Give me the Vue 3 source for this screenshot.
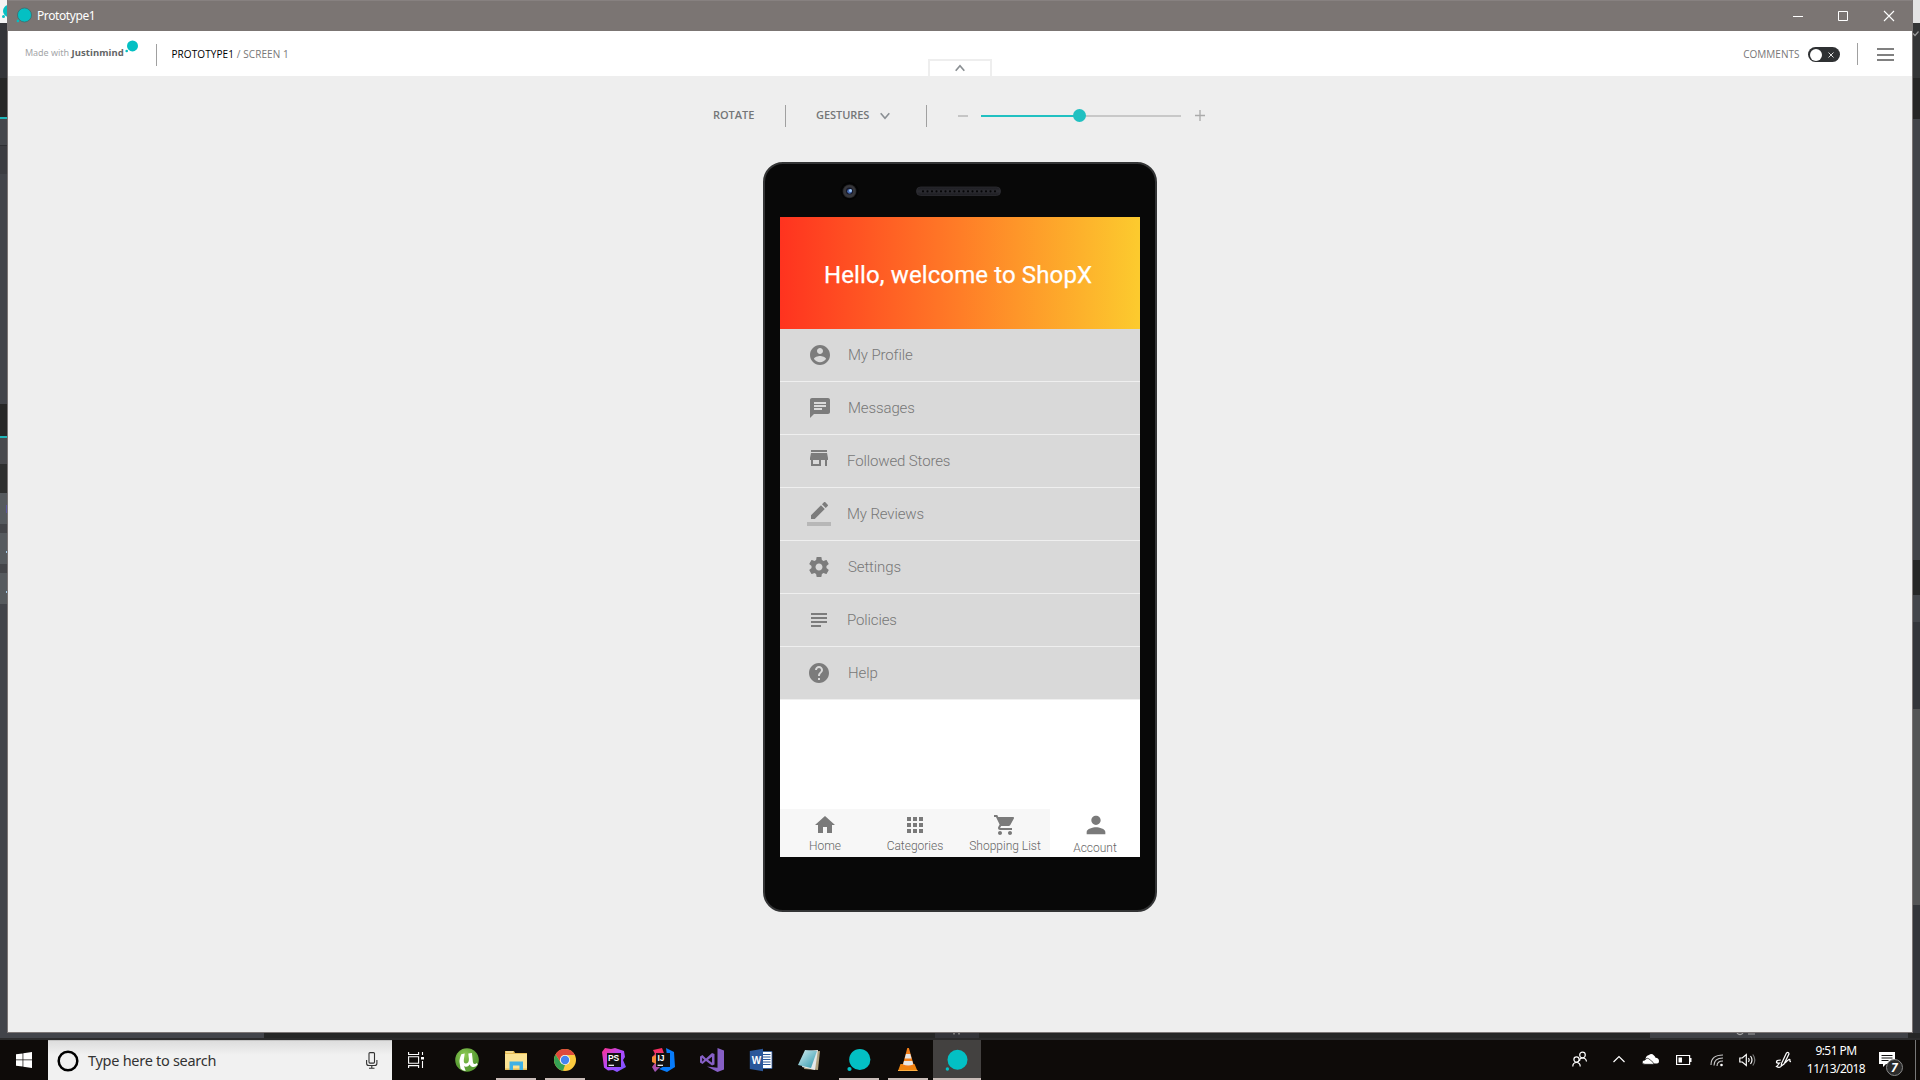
<script setup>
const menu = [
  { label: 'My Profile', x: 28, y: 14, t: 68, d: 'M12 2C6.48 2 2 6.48 2 12s4.48 10 10 10 10-4.48 10-10S17.52 2 12 2zm0 3c1.66 0 3 1.34 3 3s-1.34 3-3 3-3-1.34-3-3 1.34-3 3-3zm0 14.2c-2.5 0-4.71-1.28-6-3.22.03-1.99 4-3.08 6-3.08 1.99 0 5.97 1.09 6 3.08-1.29 1.94-3.5 3.22-6 3.22z' },
  { label: 'Messages', x: 28, y: 14, t: 68, d: 'M20 2H4c-1.1 0-1.99.9-1.99 2L2 22l4-4h14c1.1 0 2-.9 2-2V4c0-1.1-.9-2-2-2zM6 9h12v2H6V9zm8 5H6v-2h8v2zm4-6H6V6h12v2z' },
  { label: 'Followed Stores', x: 27, y: 11, t: 67, d: 'M20 4H4v2h16V4zm1 10v-2l-1-5H4l-1 5v2h1v6h10v-6h4v6h2v-6h1zm-9 4H6v-4h6v4z' },
  { label: 'My Reviews', x: 27, y: 14, t: 67, bar: true, d: 'M17.75 7L14 3.25l-10 10V17h3.75l10-10zm2.96-2.96c.39-.39.39-1.02 0-1.41L18.37.29c-.39-.39-1.02-.39-1.41 0L15 2.25 18.75 6l1.96-1.96z' },
  { label: 'Settings', x: 27, y: 14, t: 68, d: 'M19.43 12.98c.04-.32.07-.64.07-.98s-.03-.66-.07-.98l2.11-1.65c.19-.15.24-.42.12-.64l-2-3.46c-.12-.22-.39-.3-.61-.22l-2.49 1c-.52-.4-1.08-.73-1.69-.98l-.38-2.65C14.46 2.18 14.25 2 14 2h-4c-.25 0-.46.18-.49.42l-.38 2.65c-.61.25-1.17.59-1.69.98l-2.49-1c-.23-.09-.49 0-.61.22l-2 3.46c-.13.22-.07.49.12.64l2.11 1.65c-.04.32-.07.65-.07.98s.03.66.07.98l-2.11 1.65c-.19.15-.24.42-.12.64l2 3.46c.12.22.39.3.61.22l2.49-1c.52.4 1.08.73 1.69.98l.38 2.65c.03.24.24.42.49.42h4c.25 0 .46-.18.49-.42l.38-2.65c.61-.25 1.17-.59 1.69-.98l2.49 1c.23.09.49 0 .61-.22l2-3.46c.12-.22.07-.49-.12-.64l-2.11-1.65zM12 15.5c-1.93 0-3.5-1.57-3.5-3.5s1.57-3.5 3.5-3.5 3.5 1.57 3.5 3.5-1.57 3.5-3.5 3.5z' },
  { label: 'Policies', x: 27, y: 14, t: 67, d: 'M14 17H4v2h10v-2zm6-8H4v2h16V9zM4 15h16v-2H4v2zM4 5v2h16V5H4z' },
  { label: 'Help', x: 27, y: 14, t: 68, d: 'M12 2C6.48 2 2 6.48 2 12s4.48 10 10 10 10-4.48 10-10S17.52 2 12 2zm1 17h-2v-2h2v2zm2.07-7.75l-.9.92C13.45 12.9 13 13.5 13 15h-2v-.5c0-1.1.45-2.1 1.17-2.83l1.24-1.26c.37-.36.59-.86.59-1.41 0-1.1-.9-2-2-2s-2 .9-2 2H8c0-2.21 1.79-4 4-4s4 1.79 4 4c0 .88-.36 1.68-.93 2.25z' },
]
const tabs = [
  { label: 'Home', d: 'M10 20v-6h4v6h5v-8h3L12 3 2 12h3v8z' },
  { label: 'Categories', d: 'M4 8h4V4H4v4zm6 12h4v-4h-4v4zm-6 0h4v-4H4v4zm0-6h4v-4H4v4zm6 0h4v-4h-4v4zm6-10v4h4V4h-4zm-6 4h4V4h-4v4zm6 6h4v-4h-4v4zm0 6h4v-4h-4v4z' },
  { label: 'Shopping List', d: 'M7 18c-1.1 0-1.99.9-1.99 2S5.9 22 7 22s2-.9 2-2-.9-2-2-2zM1 2v2h2l3.6 7.59-1.35 2.45c-.16.28-.25.61-.25.96 0 1.1.9 2 2 2h12v-2H7.42c-.14 0-.25-.11-.25-.25l.03-.12.9-1.63h7.45c.75 0 1.41-.41 1.75-1.03l3.58-6.49c.08-.14.12-.31.12-.48 0-.55-.45-1-1-1H5.21l-.94-2H1zm16 16c-1.1 0-1.99.9-1.99 2s.89 2 1.99 2 2-.9 2-2-.9-2-2-2z' },
  { label: 'Account', active: true, d: 'M12 12c2.21 0 4-1.79 4-4s-1.79-4-4-4-4 1.79-4 4 1.79 4 4 4zm0 2c-2.67 0-8 1.34-8 4v2h16v-2c0-2.66-5.33-4-8-4z' },
]
const leftStrip = [
  [23, '#f4f4f4'], [55, '#343539'], [39, '#272727'], [2, '#1fb5b8'], [26, '#44464b'], [1, '#2e2f33'], [28, '#3b3c41'], [230, '#42444a'],
  [32, '#272727'], [2, '#1fb5b8'], [26, '#48494d'], [29, '#2e2f2f'], [31, '#565a5e'], [9, '#444549'], [31, '#565a5e'], [9, '#444549'], [31, '#565a5e'], [436, '#42444a'],
]
const rightStrip = [[23, '#e4e4e4'], [55, '#343536'], [41, '#262626'], [441, '#43454a'], [35, '#262727'], [27, '#43464b'], [87, '#34363b'], [196, '#545556'], [135, '#34363b']]
const speakerDots = Array.from({ length: 17 }, (_, i) => 8 + i * 4.5)
</script>

<template>
  <div class="desktop">
    <div class="stage">
      <div class="strip">
        <div v-for="(s, i) in leftStrip" :key="i" :style="{ height: s[0] + 'px', background: s[1] }"></div>
        <svg class="peek" width="7" height="600"><circle cx="9" cy="11" r="6" fill="#04c0c3" /><circle cx="3.500" cy="16.500" r="1.500" fill="#04c0c3" /><path d="M6 505h1v8H6z" fill="#5a56a0" /><path d="M6 551h1v2H6zM6 591h1v2H6z" fill="#9fc8e8" /></svg>
      </div>
      <div class="window">
        <header class="titlebar">
          <svg width="16" height="16"><circle cx="8.500" cy="8" r="7" fill="#04c0c3" stroke="#3b6667" stroke-width=".7" /><circle cx="1.900" cy="13.900" r="1.300" fill="#04c0c3" /></svg>
          <span class="wtitle">Prototype1</span>
          <svg class="controls" width="102" height="12" fill="none" stroke="#fff">
            <path d="M0 6.500h10M45.500 1.500h9v9h-9z" /><path d="M91 1l10 10M101 1l-10 10" stroke-width="1.100" />
          </svg>
        </header>
        <div class="appbar">
          <div class="made"><span class="made1">Made with</span><b>Justinmind</b></div>
          <svg class="madedot" width="13" height="13"><circle cx="7.500" cy="5.900" r="5.500" fill="#04c0c3" /><circle cx="1.700" cy="11" r="1.300" fill="#04c0c3" /></svg>
          <i class="sep sep-a"></i>
          <div class="crumbs"><span>PROTOTYPE1</span> / SCREEN 1</div>
          <div class="pull"><svg width="10" height="8" fill="none" stroke="#8a8f93" stroke-width="1.700"><path d="M.7 6.700L5 1.700l4.300 5" /></svg></div>
          <div class="comments">COMMENTS</div>
          <div class="toggle"><i></i><svg width="6" height="6" stroke="#ddd" stroke-width="1"><path d="M.5 .5l5 5M5.500 .5l-5 5" /></svg></div>
          <i class="sep sep-b"></i>
          <div class="burger"><i></i><i></i><i></i></div>
        </div>
        <main class="canvas">
          <div class="tools">
            <span class="rotate">ROTATE</span>
            <i class="sep"></i>
            <span class="gest">GESTURES</span>
            <svg class="chev" width="10" height="8" fill="none" stroke="#8a8f93" stroke-width="1.600"><path d="M.7 1.200L5 6.200l4.300-5" /></svg>
            <i class="sep sep-c"></i>
            <svg class="minus" width="10" height="11" stroke="#b4b4b4" stroke-width="1.400"><path d="M0 5h10" /></svg>
            <div class="slider"><i class="fill"></i><i class="thumb"></i></div>
            <svg class="plus" width="10" height="12" stroke="#aaa" stroke-width="1.300"><path d="M0 5.500h10M5 0v11" /></svg>
          </div>
          <div class="phone">
            <svg class="bezel" width="390" height="53">
              <defs>
                <radialGradient id="lens"><stop offset="0" stop-color="#33343c" /><stop offset=".8" stop-color="#37373b" /><stop offset="1" stop-color="#18181a" /></radialGradient>
                <linearGradient id="grille" x2="0" y2="1"><stop offset="0" stop-color="#1c1c20" /><stop offset=".5" stop-color="#2c2c32" /><stop offset="1" stop-color="#1d1d21" /></linearGradient>
              </defs>
              <circle cx="84.500" cy="27" r="9" fill="#030303" />
              <circle cx="84.500" cy="27.300" r="7" fill="url(#lens)" />
              <circle cx="84.500" cy="27" r="3.600" fill="#15182a" />
              <circle cx="84.600" cy="27.300" r="2.400" fill="#4569b0" /><circle cx="85.500" cy="26.600" r="1.500" fill="#9cc4f2" />
              <rect x="151.500" y="23" width="84" height="8.500" rx="4" fill="url(#grille)" stroke="#303036" stroke-width=".7" />
              <circle v-for="d in speakerDots" :key="d" :cx="150 + d" cy="27.300" r="1.100" fill="#050507" />
            </svg>
            <div class="screen">
              <div class="hero">Hello, welcome to ShopX</div>
              <div v-for="m in menu" :key="m.label" class="row">
                <svg width="24" height="24" :style="{ marginLeft: m.x + 'px', marginTop: m.y + 'px' }"><path v-if="m.bar" d="M0 20h24v4H0z" fill="#b7b7b7" /><path :d="m.d" fill="#7c7c7c" /></svg>
                <span :style="{ marginLeft: m.t - m.x - 24 + 'px' }">{{ m.label }}</span>
              </div>
              <nav class="tabs">
                <div v-for="t in tabs" :key="t.label" class="tab" :class="{ active: t.active }">
                  <svg viewBox="0 0 24 24"><path :d="t.d" fill="#7a7a7a" /></svg><span>{{ t.label }}</span>
                </div>
              </nav>
            </div>
          </div>
        </main>
      </div>
      <div class="strip right">
        <div v-for="(s, i) in rightStrip" :key="i" :style="{ height: s[0] + 'px', background: s[1] }"></div>
        <svg class="tick" width="6" height="6" fill="none" stroke="#9a9a9a" stroke-width="1.200"><path d="M0 2.500l2 2L5.500 .5" /></svg>
      </div>
    </div>
    <div class="below">
      <i class="b1"></i>
      <svg class="b2" width="44" height="5"><path d="M18 0h2v1.500h-2zM23 0h2v1.500h-2z" fill="#777" /></svg>
      <svg class="b3" width="258" height="5"><path d="M87 0q3 3 6 0M98 1h7" fill="none" stroke="#a0a0a0" stroke-width="1.200" /></svg>
    </div>

    <footer class="taskbar">
      <svg class="start" width="16" height="16" fill="#fff"><path d="M0 2.300l6.600-.9v6.200H0zM7.300 1.300L16 0v7.600H7.300zM0 8.300h6.600v6.300L0 13.700zM7.300 8.300H16V16l-8.700-1.200z" /></svg>
      <div class="search">
        <svg width="22" height="22"><circle cx="11" cy="11" r="9.300" fill="none" stroke="#000" stroke-width="2.500" /></svg>
        <span>Type here to search</span>
        <svg class="mic" width="12" height="17" fill="none" stroke="#333" stroke-width="1.100"><rect x="3" y=".6" width="5.500" height="10.500" rx="1" /><path d="M.6 8v3.200q0 2.300 2.300 2.300h5.700q2.300 0 2.300-2.300V8M5.800 13.500v2.500M3 16.300h5.500" /></svg>
      </div>
      <svg class="taskview" width="16" height="16" fill="none" stroke="#fff" stroke-width="1.100"><path d="M.6 0v2.500h10V0M.6 4.800h10v6.500H.6zM.6 16v-2.400h10V16M14.500 0v3M14.500 9v7" /><path d="M13 5h3v2.500h-3z" fill="#fff" stroke="none" /></svg>
      <div class="apps">
        <div class="app">
          <svg width="24" height="24"><defs><radialGradient id="ut" cx=".4" cy=".3"><stop offset="0" stop-color="#8fcb55" /><stop offset="1" stop-color="#5b9f35" /></radialGradient></defs><circle cx="12" cy="12" r="11.800" fill="url(#ut)" /><path d="M6.300 6.300l3.400-.8-.9 6.500q-.3 3.700 2.400 3.500 2.800-.3 2.700-4.500L13.300 5.500l3.600-.6 1 9q.3 2.500 2.300 2l1.800-.8.6 1.700q-2.500 2.700-5 2.200-2.200-.5-2.900-2.600-1.500 2.600-4 2.400-.9 0-1.700-.8l1.700 5q-3.200-.6-5.200-2.600L4.500 14q-.3-2.500 1.800-7.700z" fill="#fff" /></svg>
        </div>
        <div class="app run">
          <svg width="24" height="24"><path d="M1 3h9l1 2h12v17H1z" fill="#e7bd55" /><path d="M1 6h22v14.500H1z" fill="#fbe393" /><path d="M2 4h7" stroke="#fff4c9" /><path d="M5.500 22v-8.500h13.500V22h-3.500v-4.500H9V22z" fill="#3fb1e5" /></svg>
        </div>
        <div class="app run">
          <svg width="24" height="24"><circle cx="12" cy="12" r="11" fill="#fbca3e" /><path d="M2.500 6.500A11 11 0 0 1 21.800 7H12a5 5 0 0 0-4.500 7z" fill="#dd4a3d" /><path d="M2.500 6.500L7.600 14.500 12 17l-2 5.800A11 11 0 0 1 2.500 6.500z" fill="#35a153" /><circle cx="12" cy="12" r="5.100" fill="#f5f5f5" /><circle cx="12" cy="12" r="4.200" fill="#4484f0" /></svg>
        </div>
        <div class="app">
          <svg width="24" height="24"><defs><linearGradient id="ps" x2="1" y2="1"><stop offset="0" stop-color="#ff318c" /><stop offset=".5" stop-color="#b04bff" /><stop offset="1" stop-color="#7056ff" /></linearGradient></defs><path d="M0 4l3-4 6 1 4-1 9 3 1 6-2 3 3 7-9 5-4-2-5 .5-4-3z" fill="url(#ps)" /><rect x="5" y="5" width="14" height="14" fill="#101010" /><text class="jb" x="5.900" y="12.500">PS</text><path d="M6.500 17.300h5.500" stroke="#fff" stroke-width="1.200" /></svg>
        </div>
        <div class="app">
          <svg width="24" height="24"><defs><linearGradient id="ij" x2="0" y2="1"><stop offset="0" stop-color="#ff2b5b" /><stop offset="1" stop-color="#9957b9" /></linearGradient></defs><path d="M2 2l9-2 3 8-3 9-7 7-3-5 3-4-3-6 3-3z" fill="url(#ij)" /><path d="M1 9l4-2v9l-4-2z" fill="#f58b36" /><path d="M15 0l8 4 1 15-8 5-8-3 9-5z" fill="#087cfa" /><rect x="5" y="5" width="14" height="14" fill="#101010" /><text class="jb" x="6.500" y="12.500">IJ</text><path d="M6.500 17.300h5.500" stroke="#fff" stroke-width="1.200" /></svg>
        </div>
        <div class="app">
          <svg width="24" height="24" fill="#865fc5"><path d="M17.500 0L24 2.500v19L17.500 24 7 18.500l10.500 1.200z" /><path d="M0 8.500L2.500 7 6 10.500 12 5l2.500 1v10.500L12 17.500 6 13l-3.500 3L0 14.500zM2.200 9.800v3.900l2-2zM12 8.700l-4 3 4 3z" fill-rule="evenodd" /></svg>
        </div>
        <div class="app">
          <svg width="24" height="24"><path d="M12 3.500h11v17H12z" fill="#fff" stroke="#2b579a" stroke-width=".8" /><path d="M14 6.500h7.500M14 9h7.500M14 11.500h7.500M14 14h7.500M14 16.500h7.500" stroke="#2b579a" /><path d="M.8 3L14 .8v22.400L.8 21z" fill="#2b579a" /><text class="word" x="2.800" y="16">W</text></svg>
        </div>
        <div class="app">
          <svg class="note" width="24" height="24"><defs><linearGradient id="np" x2="1" y2="1"><stop offset="0" stop-color="#d9f0f3" /><stop offset="1" stop-color="#2895aa" /></linearGradient></defs><path d="M10 4l12-1-2 19-14-1z" fill="#b0a27e" /><path d="M8 3l12-1-3 20-13-3z" fill="#e5e8e8" /><path d="M7 2l12 1-6 17-13-3z" fill="url(#np)" /></svg>
        </div>
        <div class="app run"><svg width="24" height="24" fill="#03c0c4"><circle cx="12.800" cy="11.500" r="10.600" /><circle cx="2.500" cy="21" r="2.100" /></svg></div>
        <div class="app run">
          <svg width="24" height="24"><path d="M4.500 16h14l3 7H2z" fill="#ee8410" /><path d="M11.300 0h1.600L18 18q-5.500 3-11.500 0z" fill="#f47f18" /><path d="M10 6h4.300l1.200 4.500H8.700zM8 13h8.300l1 3.500q-5 2-10.300 0z" fill="#e6e6e6" /><path d="M2 22h19.500v1H2z" fill="#ffb043" /></svg>
        </div>
        <div class="app active"><svg width="24" height="24" fill="#03c0c4"><circle cx="12.500" cy="11.800" r="10" /><circle cx="2.400" cy="21" r="1.700" /></svg></div>
      </div>
      <div class="tray">
        <svg width="16" height="16" fill="none" stroke="#fff" stroke-width="1.200"><circle cx="10.500" cy="4" r="2.800" /><path d="M7.500 10q0-3 3-3 3.500 0 4 3.500" /><circle cx="4.500" cy="8.500" r="2.600" /><path d="M.8 15.500q0-4 3.700-4t3.700 4" /></svg>
        <svg width="14" height="16" fill="none" stroke="#fff" stroke-width="1.200" style="margin-left: 24px"><path d="M1.500 11l5.500-5.500L12.500 11" /></svg>
        <svg width="18" height="16" fill="#fff" style="margin-left: 16px"><path d="M3.500 8Q4 4.500 7 4q2.500-2 5 .5 1.500 1.200 1.500 2.300 3.500.2 3.500 3.400 0 2.300-2 2.300H9z" /><path d="M3 13.300q-3-.2-2.800-2.400Q.6 9 3 9q2-3.400 5.300 0L11 11.300q2 2-.5 2z" stroke="#111" stroke-width=".7" /></svg>
        <svg width="16" height="16" style="margin-left: 16px"><path d="M.6 4.500h13v9H.6z" fill="none" stroke="#fff" stroke-width="1.200" /><path d="M14 7h1.500v4H14zM2.500 6.500h3.500v5H2.500z" fill="#fff" /></svg>
        <svg width="15" height="16" fill="none" stroke="#c8c8c8" stroke-width="1.100" style="margin-left: 18px"><path d="M1 14Q1 4 13 4M4 14.500Q4 7 13 7M7 15q0-5 6-5" /><circle cx="11.500" cy="14" r="1.300" fill="#fff" stroke="none" /></svg>
        <svg width="18" height="17" fill="none" stroke="#fff" stroke-width="1.200" style="margin-left: 14px"><path d="M.8 7h2.500l4-3.500v11l-4-3.500H.8zM9.500 7q1.500 2 0 4M11.500 5q3 4 0 8" /><path d="M13.800 3.500q4 5.500 0 11" stroke="#777" /></svg>
        <svg width="18" height="18" fill="none" stroke="#fff" stroke-width="1.200" style="margin-left: 18px"><path d="M6.500 12.500L11.500 2q2-1.500 2.500.8L9 13l-2.800 2zM5.800 9Q1 9 1.500 11.500 2.500 12.500 4.500 12q-2 3-3 3.500 3 2 5-.5M10 12q4.500-5 5-3-.5 2 1 1.500" /></svg>
        <div class="clock"><span>9:51 PM</span><span>11/13/2018</span></div>
        <svg width="26" height="28" style="margin-left: 13px"><path d="M1 1h16v12H8l-3 3v-3H1z" fill="#fff" /><path d="M3.500 4.500h11M3.500 7h11M3.500 9.500h7" stroke="#111" /><circle cx="16.500" cy="16.500" r="8" fill="#2b2b2b" stroke="#898989" /><text class="badge" x="13" y="21">7</text></svg>
        <i class="peekline"></i>
      </div>
    </footer>
  </div>
</template>

<style>
body { margin: 0; overflow: hidden; }
</style>
<style scoped>
* { box-sizing: border-box; }
svg, i { display: block; flex: none; }
span { white-space: nowrap; }
.desktop { width: 1920px; height: 1080px; display: flex; flex-direction: column; font-family: "Open Sans", sans-serif; overflow: hidden; }
.stage { height: 1033px; display: flex; flex: none; }
.strip { width: 7px; height: 1033px; overflow: hidden; flex: none; position: relative; }
.peek { position: absolute; left: 0; top: 0; }
.tick { position: absolute; left: 0; top: 31px; }
.window { width: 1906px; border: 1px solid #7b7575; border-top: 0; display: flex; flex-direction: column; }
.titlebar { height: 31px; flex: none; background: #7b7573; border-top: 1px solid #878180; display: flex; align-items: center; padding: 0 17px 0 8px; color: #fff; }
.titlebar svg:first-child { margin-top: -2px; }
.wtitle { font: 12px/18px "Noto Sans", sans-serif; margin-left: 5px; letter-spacing: -.4px; }
.controls { margin-left: auto; margin-top: -1px; }
.appbar { height: 45px; flex: none; background: #fff; display: flex; align-items: flex-start; position: relative; }
.made { width: 100px; margin: 14px 0 0 17px; font: 9px/16px "Noto Sans", sans-serif; color: #a4a6a8; display: flex; gap: 3px; letter-spacing: -.05px; white-space: nowrap; }
.made b { color: #636566; font-size: 9.500px; letter-spacing: .1px; margin-left: -.5px; }
.madedot { margin: 9px 0 0 0; }
.sep { width: 1px; height: 22px; background: #a0a0a0; }
.sep-a { margin: 13px 0 0 18px; }
.crumbs { font-size: 10px; line-height: 16px; margin: 15px 0 0 14.500px; color: #777; letter-spacing: .09px; white-space: nowrap; }
.crumbs span { color: #000; }
.pull { position: absolute; left: 920px; top: 28px; width: 64px; height: 17px; border: 2px solid #eee; border-bottom: 0; display: flex; justify-content: center; padding-top: 3px; }
.comments { margin: 15px 0 0 auto; font-size: 10px; line-height: 16px; color: #777; letter-spacing: .02px; }
.toggle { width: 32px; height: 15px; border-radius: 8px; background: #2f3133; margin: 16px 0 0 8.500px; display: flex; align-items: center; padding-left: 2px; gap: 6px; }
.toggle i { width: 12px; height: 12px; border-radius: 50%; background: #fff; }
.sep-b { margin: 12px 0 0 17px; }
.burger { width: 17px; margin: 17px 18px 0 19px; display: flex; flex-direction: column; gap: 3.500px; }
.burger i { height: 2px; background: #808080; }
.canvas { flex: 1; background: #eee; display: flex; flex-direction: column; }
.tools { height: 22px; margin: 29px 0 0 705px; display: flex; align-items: center; font-size: 11px; line-height: 16px; font-weight: 600; color: #747678; }
.tools span { margin-top: -2px; }
.rotate { width: 72px; letter-spacing: -.05px; }
.gest { margin-left: 30px; width: 54px; letter-spacing: -.05px; }
.chev { margin-left: 10px; }
.sep-c { margin-left: 36px; }
.minus { margin-left: 31px; }
.slider { width: 200px; height: 2px; background: #c8c8c8; margin-left: 13px; position: relative; }
.fill { width: 98px; height: 2px; background: #20c0c1; }
.thumb { position: absolute; left: 92px; top: -6px; width: 13px; height: 13px; border-radius: 50%; background: #20c0c1; }
.plus { margin-left: 14px; }
.phone { width: 394px; height: 750px; margin: 35px 0 0 755px; border: 2px solid #333435; border-radius: 20px; background: #080808; }
.bezel { display: block; }
.screen { width: 360px; height: 640px; margin-left: 15px; background: #fff; font-family: Roboto, sans-serif; display: flex; flex-direction: column; }
.hero { height: 112px; background: linear-gradient(90deg, #ff331f, #ff7d27 50%, #fccb2e); color: #fff; font-size: 24px; line-height: 28px; padding: 44px 0 0 44px; white-space: nowrap; letter-spacing: .12px; -webkit-text-stroke: .25px #fff; }
.row { height: 53px; background: #d9d9d9; border-bottom: 1px solid #efefef; display: flex; align-items: flex-start; font-size: 15px; font-weight: 300; color: #777; }
.row span { line-height: 20px; margin-top: 16px; letter-spacing: -.12px; }
.tabs { height: 48px; margin-top: auto; background: #f7f7f7; display: flex; }
.tab { width: 90px; display: flex; flex-direction: column; align-items: center; font-size: 12px; line-height: 14px; font-weight: 300; color: #666; padding-top: 4px; }
.tab svg { width: 24px; height: 24px; }
.tab span { margin-top: 2px; }
.tab.active { background: #fff; padding: 2px 0 0; }
.tab.active svg { width: 28px; height: 28px; margin-left: 1px; }
.below { height: 7px; flex: none; background: #252626; border-bottom: 2px solid #2b2b2c; display: flex; }
.b1 { width: 264px; height: 5px; background: #42444a; }
.b2 { margin-left: 671px; background: #34353a; }
.b3 { margin-left: 671px; background: #3f4146; }
.taskbar { height: 40px; flex: none; background: #0e0b09; display: flex; }
.start { margin: 12px 16px 0; }
.search { width: 344px; height: 40px; background: linear-gradient(#ddd, #f1f1f1 14px); border-top: 1px solid #c3c3c3; display: flex; align-items: center; padding-left: 9px; color: #333; }
.search span { font: 14.500px/20px "Noto Sans", sans-serif; margin-left: 9px; letter-spacing: -.28px; margin-top: -1px; }
.mic { margin: 0 14px 0 auto; }
.taskview { margin: 12px 0 0 16px; }
.apps { display: flex; margin-left: 18px; }
.app { width: 49px; height: 40px; display: flex; justify-content: center; padding-top: 8px; position: relative; }
.run::after, .active.app::after { content: ""; position: absolute; bottom: 0; left: 5px; right: 4px; height: 2px; background: #c9bcb8; }
.active.app { background: #434140; width: 48px; margin-left: 1px; }
.active.app::after { left: 0; right: 0; }
.jb { font: bold 8.500px "Liberation Sans", sans-serif; fill: #fff; }
.word { font: bold 10px "Liberation Sans", sans-serif; fill: #fff; }
.tray { margin-left: auto; width: 348px; flex: none; display: flex; align-items: flex-start; padding-top: 11px; }
.clock { width: 58px; margin: -9px 0 0 14px; display: flex; flex-direction: column; align-items: center; color: #fff; font: 12px/18px "Noto Sans", sans-serif; letter-spacing: -.55px; }
.badge { font: italic bold 12px "Noto Sans", sans-serif; fill: #fff; }
.peekline { width: 1px; height: 40px; background: #777; margin: -11px 4px 0 auto; }
</style>
